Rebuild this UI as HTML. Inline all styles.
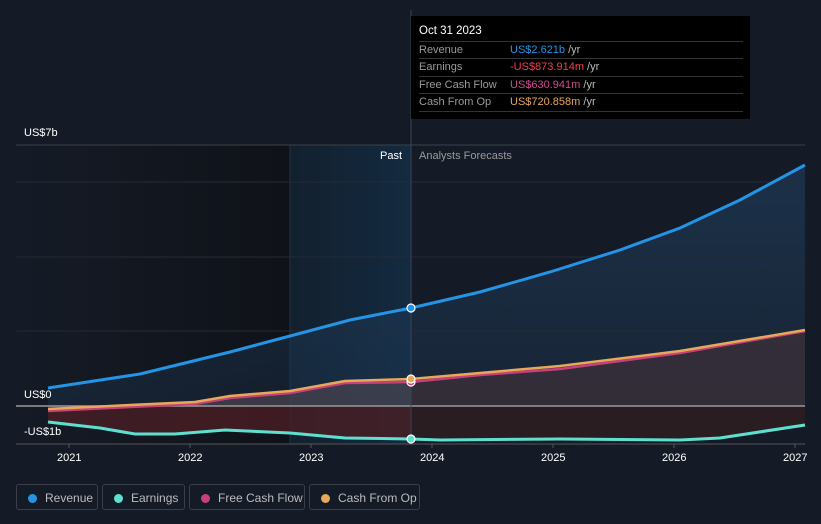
<!DOCTYPE html><html><head><style>
body{margin:0;width:821px;height:524px;background:#151b26;font-family:"Liberation Sans",sans-serif;overflow:hidden;position:relative}
.tt{position:absolute;left:411px;top:16px;width:339px;height:103px;background:#000;color:#fff;font-size:11px}
.tt .h{position:absolute;left:8px;top:9px;font-size:11.5px}
.row{position:absolute;left:8px;width:324px;border-top:1px solid #333;height:17px;line-height:17px;color:#999}
.row span{position:absolute;left:91px}
.leg{position:absolute;top:484px;height:26px;border:1px solid #3a3f4a;border-radius:3px;color:#bbb;font-size:12px;line-height:26px;box-sizing:border-box}
.leg i{position:absolute;left:11px;top:9px;width:9px;height:9px;border-radius:50%}
.leg b{font-weight:normal;position:absolute;left:28px}
.ax{position:absolute;color:#fff;font-size:11px}
</style></head><body>
<svg width="821" height="524" style="position:absolute;left:0;top:0">
<defs>
<linearGradient id="pg" x1="0" x2="1"><stop offset="0" stop-color="#151b26"/><stop offset="1" stop-color="#0f1218"/></linearGradient>
<linearGradient id="bl" x1="0" x2="1"><stop offset="0" stop-color="#13202e"/><stop offset="1" stop-color="#132a40"/></linearGradient>
<linearGradient id="rv" x1="0" y1="0" x2="0" y2="1"><stop offset="0" stop-color="#1e3a58" stop-opacity=".7"/><stop offset="1" stop-color="#1e3a58" stop-opacity=".3"/></linearGradient>
</defs>
<rect x="16" y="145" width="274" height="299" fill="url(#pg)"/>
<rect x="290" y="145" width="121" height="299" fill="url(#bl)"/>
<line x1="290" y1="145" x2="290" y2="444" stroke="#1e3448"/>
<path d="M48,388 L140,374 230,352 290,336 350,320 411,308 480,292 550,272 620,250 680,228 740,200 805,165 L805,406 48,406Z" fill="url(#rv)"/>
<path d="M411,379 L480,373 560,366 680,351 805,330 L805,406 411,406Z" fill="#3a2f38" opacity=".8"/>
<path d="M48,409 L130,405 195,402 230,396 290,391 345,381 411,379 L411,406 48,406Z" fill="#4a4450" opacity=".7"/>
<path d="M48,411 L48,423 100,428 135,434 175,434 225,430 290,433 345,438 411,439 L411,406 48,406Z" fill="#4a1e24" opacity=".8"/>
<path d="M411,406 L411,439 440,440 560,439 680,440 720,438 805,425 L805,406Z" fill="#2e1e22" opacity=".8"/>
<g stroke="#252b35" stroke-width="1"><line x1="16" y1="145" x2="805" y2="145" stroke="#3a404a"/><line x1="16" y1="182" x2="805" y2="182"/><line x1="16" y1="257" x2="805" y2="257"/><line x1="16" y1="331" x2="805" y2="331"/><line x1="16" y1="444" x2="805" y2="444" stroke="#555"/></g>
<line x1="16" y1="406" x2="805" y2="406" stroke="#999" stroke-width="1.5"/>
<line x1="411" y1="10" x2="411" y2="444" stroke="#3a4452"/>
<path d="M48,388 L140,374 230,352 290,336 350,320 411,308 480,292 550,272 620,250 680,228 740,200 805,165" fill="none" stroke="#2394e6" stroke-width="3"/>
<path d="M48,411 L130,407 195,404 230,398 290,393 345,383 411,382 480,375 560,369 680,353 805,331" fill="none" stroke="#c8407a" stroke-width="2.5"/>
<path d="M48,409 L130,405 195,402 230,396 290,391 345,381 411,379 480,373 560,366 680,351 805,330" fill="none" stroke="#e8a85a" stroke-width="2.5"/>
<path d="M48,422 L100,428 135,434 175,434 225,430 290,433 345,438 411,439 440,440 560,439 680,440 720,438 805,425" fill="none" stroke="#5de0d0" stroke-width="3"/>
<g stroke="#fff" stroke-width="1.2"><circle cx="411" cy="308" r="4" fill="#2394e6"/><circle cx="411" cy="382" r="4" fill="#c8407a"/><circle cx="411" cy="379" r="4" fill="#e8a85a"/><circle cx="411" cy="439" r="4" fill="#5de0d0"/></g>
<g stroke="#555"><line x1="69" y1="444" x2="69" y2="448"/><line x1="190" y1="444" x2="190" y2="448"/><line x1="311" y1="444" x2="311" y2="448"/><line x1="432" y1="444" x2="432" y2="448"/><line x1="553" y1="444" x2="553" y2="448"/><line x1="674" y1="444" x2="674" y2="448"/><line x1="795" y1="444" x2="795" y2="448"/></g>
</svg>
<div class="ax" style="left:24px;top:127px">US$7b</div>
<div class="ax" style="left:24px;top:389px">US$0</div>
<div class="ax" style="left:24px;top:426px">-US$1b</div>
<div class="ax" style="left:380px;top:150px">Past</div>
<div class="ax" style="left:419px;top:150px;color:#999">Analysts Forecasts</div>
<div class="ax" style="left:57px;top:452px">2021</div>
<div class="ax" style="left:178px;top:452px">2022</div>
<div class="ax" style="left:299px;top:452px">2023</div>
<div class="ax" style="left:420px;top:452px">2024</div>
<div class="ax" style="left:541px;top:452px">2025</div>
<div class="ax" style="left:662px;top:452px">2026</div>
<div class="ax" style="left:783px;top:452px">2027</div>
<div class="tt"><div class="h">Oct 31 2023</div>
<div class="row" style="top:25px">Revenue<span style="color:#2394e6">US$2.621b <em style="font-style:normal;color:#bbb">/yr</em></span></div>
<div class="row" style="top:42px">Earnings<span style="color:#f0404a">-US$873.914m <em style="font-style:normal;color:#bbb">/yr</em></span></div>
<div class="row" style="top:60px">Free Cash Flow<span style="color:#d04a90">US$630.941m <em style="font-style:normal;color:#bbb">/yr</em></span></div>
<div class="row" style="top:77px;border-bottom:1px solid #333">Cash From Op<span style="color:#e8a85a">US$720.858m <em style="font-style:normal;color:#bbb">/yr</em></span></div>
</div>
<div class="leg" style="left:16px;width:82px"><i style="background:#2394e6"></i><b>Revenue</b></div>
<div class="leg" style="left:102px;width:83px"><i style="background:#5de0d0"></i><b>Earnings</b></div>
<div class="leg" style="left:189px;width:116px"><i style="background:#c8407a"></i><b>Free Cash Flow</b></div>
<div class="leg" style="left:309px;width:111px"><i style="background:#e8a85a"></i><b>Cash From Op</b></div>
</body></html>
